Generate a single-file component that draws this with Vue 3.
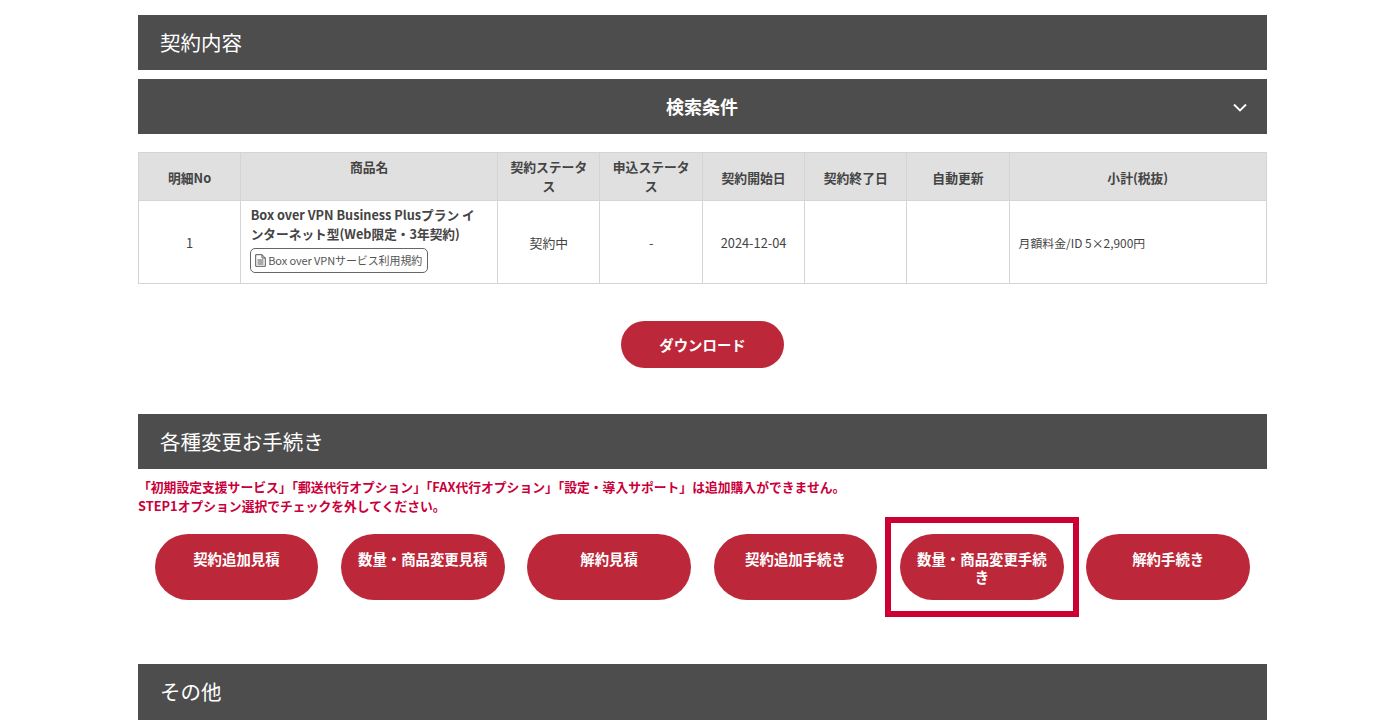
<script setup>
const headers = [
  { label: '明細No', cls: 'mid' },
  { label: '商品名', cls: '' },
  { label: '契約ステータス', cls: '' },
  { label: '申込ステータス', cls: '' },
  { label: '契約開始日', cls: 'mid' },
  { label: '契約終了日', cls: 'mid' },
  { label: '自動更新', cls: 'mid' },
  { label: '小計(税抜)', cls: 'mid' }
]
const actions = ['契約追加見積', '数量・商品変更見積', '解約見積', '契約追加手続き', '数量・商品変更手続き', '解約手続き']
</script>

<template>
  <div class="page">
    <h2 class="bar">契約内容</h2>
    <div class="search">
      <span>検索条件</span>
      <svg class="chev" width="14" height="9" viewBox="0 0 14 9"><path d="M1 1.500 7 7.500 13 1.500" fill="none" stroke="#fff" stroke-width="1.800"/></svg>
    </div>
    <table class="tbl">
      <colgroup>
        <col class="w1"/><col class="w2"/><col class="w1"/><col class="w3"/>
        <col class="w1"/><col class="w1"/><col class="w1"/><col/>
      </colgroup>
      <thead>
        <tr><th v-for="h in headers" :key="h.label" :class="h.cls">{{ h.label }}</th></tr>
      </thead>
      <tbody>
        <tr>
          <td class="c">1</td>
          <td class="name">
            <div class="pname">Box over VPN Business Plusプラン インターネット型(Web限定・3年契約)</div>
            <span class="terms">
              <svg width="11" height="13" viewBox="0 0 11 13"><path d="M.7.7H7L10.300 4V12.300H.7ZM7 .7V4H10.300M2.500 6H8.500M2.500 8H8.500M2.500 10H8.500" fill="none" stroke="#555" stroke-width="1"/></svg>
              Box over VPNサービス利用規約
            </span>
          </td>
          <td class="c">契約中</td>
          <td class="c">-</td>
          <td class="c">2024-12-04</td>
          <td></td>
          <td></td>
          <td class="fee">月額料金/ID 5×2,900円</td>
        </tr>
      </tbody>
    </table>
    <div class="dl-row"><button class="dl">ダウンロード</button></div>
    <h2 class="bar">各種変更お手続き</h2>
    <p class="note">「初期設定支援サービス」「郵送代行オプション」「FAX代行オプション」「設定・導入サポート」は追加購入ができません。<br/>STEP1オプション選択でチェックを外してください。</p>
    <div class="actions">
      <div v-for="(a, i) in actions" :key="a" class="act-wrap">
        <button class="act">{{ a }}</button>
        <div v-if="i === 4" class="mark"></div>
      </div>
    </div>
    <h2 class="bar last">その他</h2>
  </div>
</template>

<style scoped>
.page {
  width: 1129px;
  margin-left: 138px;
  padding-top: 15px;
  font-family: "Noto Sans CJK JP", "Noto Sans", sans-serif;
  color: #444;
  height: 705px;
  overflow: hidden;
}
.bar {
  margin: 0;
  box-sizing: border-box;
  height: 55px;
  line-height: 55px;
  padding-left: 22px;
  background: #4d4d4d;
  color: #fff;
  font-size: 20.48px;
  font-weight: 400;
}
.search {
  position: relative;
  box-sizing: border-box;
  margin-top: 9px;
  height: 55px;
  padding-right: 1px;
  line-height: 55px;
  text-align: center;
  background: #4d4d4d;
  color: #fff;
  font-size: 18px;
  font-weight: 700;
}
.chev { position: absolute; right: 20px; top: 24px; }
.tbl {
  width: 1129px;
  margin-top: 18px;
  border-collapse: collapse;
  table-layout: fixed;
  font-size: 12.8px;
}
.w1 { width: 102.2px; }
.w2 { width: 257px; }
.w3 { width: 102.6px; }
.tbl th, .tbl td { border: 1px solid #d4d4d4; }
.tbl th {
  height: 48px;
  box-sizing: border-box;
  padding: 4px 10px 3px;
  background: #e0e0e0;
  font-weight: 700;
  line-height: 19px;
  vertical-align: top;
  color: #444;
}
.tbl th.mid { vertical-align: middle; }
.tbl td { height: 83px; box-sizing: border-box; padding: 0 10px; line-height: 19px; }
.c { text-align: center; }
.tbl td.name { padding: 4px 12px 0 9.5px; vertical-align: top; }
.pname { font-weight: 700; color: #444; font-size: 12.7px; }
.terms {
  display: flex;
  width: fit-content;
  align-items: center;
  gap: 2px;
  height: 25px;
  box-sizing: border-box;
  margin: 5px 0 0 -0.5px;
  padding: 0 5px 0 4px;
  border: 1px solid #666;
  border-radius: 5px;
  font-size: 11px;
  color: #555;
  letter-spacing: -0.1px;
}
.tbl td.fee { font-size: 11.9px; padding-left: 9px; }
.dl-row { display: flex; justify-content: center; padding: 37px 0 46px 0; }
.dl {
  width: 163.6px;
  height: 47px;
  border: 0;
  border-radius: 24px;
  background: #bc2839;
  color: #fff;
  font: 700 14.4px "Noto Sans CJK JP", sans-serif;
}
.note {
  margin: 8px 0 0;
  font-size: 12.8px;
  font-weight: 700;
  line-height: 19px;
  color: #c9003a;
}
.actions {
  display: flex;
  justify-content: space-between;
  padding: 19px 17px 0 16.6px;
  margin-bottom: 64px;
}
.act-wrap { position: relative; }
.act {
  box-sizing: border-box;
  width: 163.6px;
  height: 66px;
  padding: 16px 15px 0;
  border: 0;
  border-radius: 33px;
  background: #bc2839;
  color: #fff;
  font: 700 14.4px/18px "Noto Sans CJK JP", sans-serif;
  text-align: center;
  display: flex;
  justify-content: center;
  align-items: flex-start;
}
.mark {
  position: absolute;
  left: -15px;
  top: -17px;
  width: 194px;
  height: 100px;
  box-sizing: border-box;
  border: 6px solid #cc0033;
}
.bar.last { height: 60px; }
</style>

<style>
html, body { background: #fff; }
</style>
